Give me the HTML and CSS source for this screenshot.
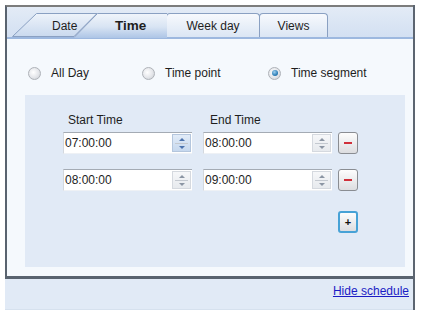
FILE: index.html
```html
<!DOCTYPE html>
<html>
<head>
<meta charset="utf-8">
<link rel="stylesheet" href="styles.css">
</head>
<body>
<div class="wrap">
  <div class="frame">
    <div class="tabs">
      <div class="tab tab-date">
        <svg class="tab-shape" width="86" height="24" viewBox="0 0 86 24"><polygon points="0.5,23.5 24.5,0.5 85,0.5 62,23.5" fill="url(#gd)" stroke="#8aa0c2" stroke-width="1"/><defs><linearGradient id="gd" x1="0" y1="0" x2="0" y2="1"><stop offset="0" stop-color="#eef3fa"/><stop offset="1" stop-color="#c9d9ee"/></linearGradient></defs></svg>
        <span class="tab-label">Date</span>
      </div>
      <div class="tab tab-time">
        <svg class="tab-shape" width="93" height="25" viewBox="0 0 93 25"><polygon points="0.5,24.5 23.5,0.5 93,0.5 93,25 0,25" fill="url(#gt)"/><polyline points="0.5,24 23.5,0.5 93,0.5" fill="none" stroke="#8aa0c2" stroke-width="1"/><defs><linearGradient id="gt" x1="0" y1="0" x2="0" y2="1"><stop offset="0" stop-color="#f1f5fb"/><stop offset="0.55" stop-color="#d8e4f3"/><stop offset="1" stop-color="#adc5e6"/></linearGradient></defs></svg>
        <span class="tab-label bold">Time</span>
      </div>
      <div class="tab tab-week">Week day</div>
      <div class="tab tab-views">Views</div>
    </div>
    <div class="content">
      <div class="radios">
        <div class="opt opt-all"><span class="radio"></span>All Day</div>
        <div class="opt opt-point"><span class="radio"></span>Time point</div>
        <div class="opt"><span class="radio checked"></span>Time segment</div>
      </div>
      <div class="panel">
        <div class="labels"><span class="lab-start">Start Time</span><span class="lab-end">End Time</span></div>
        <div class="row">
          <div class="field"><span class="val">07:00:00</span><span class="spin hot"><i class="up"></i><i class="dn"></i></span></div>
          <div class="field"><span class="val">08:00:00</span><span class="spin"><i class="up"></i><i class="dn"></i></span></div>
          <div class="btn minus"><span class="dash"></span></div>
        </div>
        <div class="row row2">
          <div class="field"><span class="val">08:00:00</span><span class="spin"><i class="up"></i><i class="dn"></i></span></div>
          <div class="field"><span class="val">09:00:00</span><span class="spin"><i class="up"></i><i class="dn"></i></span></div>
          <div class="btn minus"><span class="dash"></span></div>
        </div>
        <div class="row add-row">
          <div class="btn plus">+</div>
        </div>
      </div>
    </div>
  </div>
  <div class="footer"><a class="hide-link" href="#">Hide schedule</a></div>
</div>
</body>
</html>
```

FILE: styles.css
```css
* { box-sizing: border-box; }
html, body { margin: 0; padding: 0; background: #ffffff; }
body { font-family: "Liberation Sans", Arial, sans-serif; font-size: 12px; color: #1e1e1e; }

.wrap {
  margin: 5px 0 0 5px;
  width: 410px;
  border-right: 2px solid #5c6571;
}

.frame {
  border-top: 2px solid #7c7c7c;
  border-left: 2px solid #59636f;
  border-bottom: 3px solid #59636f;
}

.tabs {
  height: 32px;
  display: flex;
  align-items: flex-end;
  padding-left: 5px;
  background: linear-gradient(#e3ebf6, #d3e0f2);
  border-bottom: 2px solid #9db8df;
}
.tab { position: relative; height: 24px; display: flex; align-items: center; }
.tab-shape { position: absolute; left: 0; top: 0; overflow: visible; }
.tab-label { position: relative; }
.bold { font-weight: bold; font-size: 13.5px; }
.tab-date { width: 86px; padding-left: 40px; padding-top: 1px; }
.tab-time { width: 93px; margin-left: -24px; height: 25px; margin-bottom: -1px; padding-left: 41px; z-index: 1; }
.tab-week, .tab-views {
  justify-content: center;
  border: 1px solid #8aa0c2;
  border-bottom: none;
  border-radius: 4px 4px 0 0;
  background: linear-gradient(#f7f9fd, #dbe6f4);
}
.tab-week { width: 94px; margin-left: -1px; }
.tab-views { width: 69px; margin-left: -1px; }

.content {
  background: #f5f9fd;
  padding: 28px 8px 9px 18px;
}

.radios { display: flex; height: 12px; align-items: center; margin-left: 3px; }
.opt { display: flex; align-items: center; gap: 10px; line-height: 12px; }
.opt-all { width: 114px; }
.opt-point { width: 126px; }
.radio {
  width: 13px; height: 13px; border-radius: 50%;
  border: 1px solid #aeb2b8;
  background: radial-gradient(circle at 40% 40%, #ffffff 0, #e4e6ea 55%, #c6cad0 100%);
  display: flex; align-items: center; justify-content: center;
}
.radio.checked::after {
  content: ""; width: 6px; height: 6px; border-radius: 50%;
  background: radial-gradient(circle at 40% 35%, #9fd0f0 0, #2f80b8 60%, #1f5a8a 100%);
}

.panel {
  background: #e1eaf6;
  height: 172px;
  margin-top: 16px;
  padding: 18px 0 0 38px;
}
.labels { height: 14px; line-height: 14px; display: flex; }
.lab-start { width: 147px; padding-left: 5px; }
.row { display: flex; gap: 11px; margin-top: 5px; height: 22px; }
.row2 { margin-top: 15px; }
.add-row { margin-top: 20px; padding-left: 275px; }
.field {
  width: 129px; height: 22px;
  background: #ffffff;
  border-top: 1px solid #a4abb4;
  border-left: 1px solid #d3d8de;
  border-bottom: 1px solid #eef1f5;
  display: flex; align-items: center; justify-content: space-between;
  padding: 0 1px 0 1px;
}
.val { line-height: 14px; }
.spin {
  width: 19px; height: 18px;
  border: 1px solid #d5d9df;
  background: linear-gradient(#f6f7f9, #e7eaee);
  display: flex; flex-direction: column; align-items: center; justify-content: space-around;
  position: relative;
}
.spin::before { content: ""; position: absolute; left: 2px; right: 2px; top: 8px; height: 1px; background: #c4c9d0; }
.spin i { width: 0; height: 0; border-left: 3px solid transparent; border-right: 3px solid transparent; }
.spin .up { border-bottom: 3px solid #8b95a3; }
.spin .dn { border-top: 3px solid #8b95a3; }
.spin.hot { background: linear-gradient(#e2ecf8, #c6d8ee); border-color: #b4c6dd; }
.spin.hot .up { border-bottom-color: #4c73ad; }
.spin.hot .dn { border-top-color: #4c73ad; }

.btn {
  width: 20px; height: 22px; margin-left: -5px;
  border: 1px solid #8a8d92;
  border-radius: 3px;
  background: linear-gradient(#fdfdfd, #dcdde0);
  display: flex; align-items: center; justify-content: center;
}
.dash { width: 8px; height: 2px; background: #d0303a; }
.plus {
  margin-left: 0;
  border: 2px solid #47a2d6;
  font-size: 11px; font-weight: bold; color: #111; line-height: 1;
}

.footer {
  height: 31px;
  background: #e1eaf6;
  border-bottom: 1px solid #d6e1ee;
  text-align: right;
  padding: 5px 4px 0 0;
  line-height: 14px;
}
.hide-link { color: #1c1cc4; text-decoration: underline; }
```
